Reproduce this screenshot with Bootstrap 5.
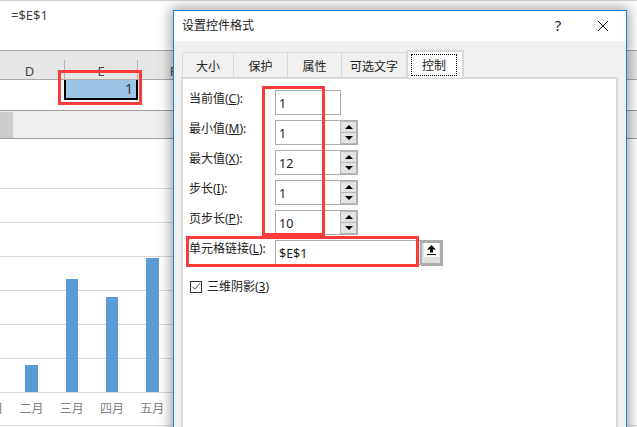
<!DOCTYPE html>
<html lang="zh-CN">
<head>
<meta charset="utf-8">
<title>设置控件格式</title>
<link href="https://cdn.jsdelivr.net/npm/bootstrap@5.3.0/dist/css/bootstrap.min.css" rel="stylesheet">
<style>
html,body{margin:0;padding:0;background:#fff}
body{font-family:"Noto Sans","Noto Sans CJK SC",sans-serif;font-size:12px;line-height:16px;color:#222}
.sheet{position:relative;width:637px;height:427px;overflow:hidden;background:#fff}
.fbar{height:51px;padding:6px 0 0 11px;border-top:1px solid #d4d4d4;border-bottom:1px solid #ababab;color:#444;font-size:13px}
.colhead{height:29px;background:#e6e6e6;border-bottom:1px solid #ababab}
.colcell{height:19px;margin-top:9px;text-align:center;color:#444;font-size:13px;line-height:22px}
.c-d{width:65px;border-right:1px solid #b5b5b5;padding-right:5px}
.c-e{width:73px;border-right:1px solid #b5b5b5}
.c-f{width:70px}
.cellrow{height:31px;border-bottom:1px solid #9a9a9a}
.selcell{margin-left:64px;width:74px;height:20px;background:#9dc3e6;border:2px solid #000;border-top:0;text-align:right;padding-right:3px;color:#333;font-size:14px;line-height:18px}
.scrollband{height:28px;background:#eee;border-bottom:1px solid #9a9a9a;padding-top:1px}
.thumb{width:13px;height:26px;background:#ccc}
.plot{margin-top:49px;height:205px;padding-bottom:1px;margin-left:-29px;width:230px;background:repeating-linear-gradient(to top,#d9d9d9 0 1px,transparent 1px 34px)}
.slot{width:40.3px;height:204px;flex:none}
.barfill{width:13px;background:#5b9bd5}
.b1{height:27px}.b2{height:113px;width:12px}.b3{height:95px;width:12px}.b4{height:134px}
.xlabels{margin-left:-29px;width:230px;height:32px;color:#7f7f7f;font-size:12px;line-height:32px}
.xlab{width:40.3px;flex:none;text-align:center}
.xline{border-top:1px solid #d9d9d9}
.dlg{position:absolute;left:173px;top:10px;width:454px;height:440px;background:#f0f0f0;border:1px solid #1883d7;box-shadow:0 0 12px 2px rgba(0,0,0,.38)}
.dlgtitle{height:30px;background:#fff;padding:7px 0 0 8px;font-size:12px;color:#222}
.dlgq{margin-left:auto;width:16px;text-align:center;margin-top:-1px;font-size:15px}
.dlgx{margin:2px 17px 0 31px;width:12px;height:12px}
.dlgbody{padding:11px 8px 0 7px}
.tabstrip{margin-left:1px;height:25px;flex-wrap:nowrap}
.tabstrip .tabitem{height:25px;padding:5px 0 0;text-align:center;background:#f0f0f0;border:1px solid #d9d9d9;border-bottom:0;border-right:0;color:#222;font-size:12px;line-height:18px}
.t1{width:51px}.t2{width:54px}.t3{width:54px}.t4{width:65px}
.tabstrip .t5{width:58px;height:28px;margin-top:-2px;background:#fff;border:2px solid #d9d9d9;border-bottom:0;padding:2px 5px 0 3px;position:relative;z-index:2}
.focusbox{display:block;height:22px;border:1px dotted #000;line-height:21px}
.pane{height:350px;background:#fff;border:2px solid #d9d9d9;border-bottom:0;padding:11px 0 0 6px}
.frow{height:25px;margin-bottom:5px}
.flabel{width:86px;flex:none;padding-top:1px;color:#222}
.fbox{height:25px;border:1px solid #ababab;background:#fff;line-height:25px;padding-left:3px;color:#222;font-size:12.5px}
.w-cur{width:66px}
.w-num{width:83px}
.w-link{width:146px}
.spin{width:17px;margin-left:auto;padding:1px;background:#b8b8b8}
.spinbtn{height:10px;background:#e3e3e3}
.spinbtn+.spinbtn{margin-top:1px}
.tri-up,.tri-dn{width:0;height:0;border-left:4px solid transparent;border-right:4px solid transparent}
.tri-up{border-bottom:4px solid #000}
.tri-dn{border-top:4px solid #000}
.refbtn{width:22px;height:26px;background:#e1e1e1;border:3px solid #adadad;border-left:1px solid #adadad}
.refface{background:#fff;height:14px;width:15px;margin-left:2px}
.chkrow{margin-top:14px;padding-left:1px}
.chkbox{width:12px;height:12px;border:1px solid #333;background:#fff;margin-right:5px}
.redbox{position:absolute;border:3px solid #fb3a3a;z-index:5}
.r1{left:58px;top:70px;width:84px;height:35px}
.r2{left:262px;top:86px;width:63px;height:150px}
.r3{left:186px;top:236px;width:233px;height:31px}
</style>
</head>
<body>
<div class="sheet">
  <div class="fbar">=$E$1</div>
  <div class="colhead d-flex">
    <div class="colcell c-d">D</div>
    <div class="colcell c-e">E</div>
    <div class="colcell c-f">F</div>
  </div>
  <div class="cellrow"><div class="selcell">1</div></div>
  <div class="scrollband"><div class="thumb"></div></div>
  <div class="plot d-flex align-items-end">
    <div class="slot"></div>
    <div class="slot d-flex justify-content-center align-items-end"><div class="barfill b1"></div></div>
    <div class="slot d-flex justify-content-center align-items-end"><div class="barfill b2"></div></div>
    <div class="slot d-flex justify-content-center align-items-end"><div class="barfill b3"></div></div>
    <div class="slot d-flex justify-content-center align-items-end"><div class="barfill b4"></div></div>
  </div>
  <div class="xlabels d-flex">
    <div class="xlab">一月</div><div class="xlab">二月</div><div class="xlab">三月</div><div class="xlab">四月</div><div class="xlab">五月</div>
  </div>
  <div class="xline"></div>

  <div class="dlg">
    <div class="dlgtitle d-flex">
      <span>设置控件格式</span>
      <span class="dlgq">?</span>
      <svg class="dlgx" viewBox="0 0 12 12"><path d="M1 1 11 11M11 1 1 11" stroke="#111" stroke-width="1" fill="none"/></svg>
    </div>
    <div class="dlgbody">
      <div class="tabstrip d-flex">
        <div class="tabitem t1">大小</div>
        <div class="tabitem t2">保护</div>
        <div class="tabitem t3">属性</div>
        <div class="tabitem t4">可选文字</div>
        <div class="tabitem t5"><span class="focusbox">控制</span></div>
      </div>
      <div class="pane">
        <div class="frow d-flex">
          <div class="flabel">当前值(<u>C</u>):</div>
          <div class="fbox w-cur">1</div>
        </div>
        <div class="frow d-flex">
          <div class="flabel">最小值(<u>M</u>):</div>
          <div class="fbox w-num d-flex">1
            <div class="spin"><div class="spinbtn d-flex justify-content-center align-items-center"><div class="tri-up"></div></div><div class="spinbtn d-flex justify-content-center align-items-center"><div class="tri-dn"></div></div></div>
          </div>
        </div>
        <div class="frow d-flex">
          <div class="flabel">最大值(<u>X</u>):</div>
          <div class="fbox w-num d-flex">12
            <div class="spin"><div class="spinbtn d-flex justify-content-center align-items-center"><div class="tri-up"></div></div><div class="spinbtn d-flex justify-content-center align-items-center"><div class="tri-dn"></div></div></div>
          </div>
        </div>
        <div class="frow d-flex">
          <div class="flabel">步长(<u>I</u>):</div>
          <div class="fbox w-num d-flex">1
            <div class="spin"><div class="spinbtn d-flex justify-content-center align-items-center"><div class="tri-up"></div></div><div class="spinbtn d-flex justify-content-center align-items-center"><div class="tri-dn"></div></div></div>
          </div>
        </div>
        <div class="frow d-flex">
          <div class="flabel">页步长(<u>P</u>):</div>
          <div class="fbox w-num d-flex">10
            <div class="spin"><div class="spinbtn d-flex justify-content-center align-items-center"><div class="tri-up"></div></div><div class="spinbtn d-flex justify-content-center align-items-center"><div class="tri-dn"></div></div></div>
          </div>
        </div>
        <div class="frow d-flex">
          <div class="flabel">单元格链接(<u>L</u>):</div>
          <div class="fbox w-link">$E$1</div>
          <div class="refbtn">
            <div class="refface d-flex justify-content-center align-items-center">
              <svg width="11" height="12" viewBox="0 0 11 12"><path d="M5.5 1 10 5.5H7V8.5H4V5.5H1Z M1 10H10V11H1Z" fill="#000"/></svg>
            </div>
          </div>
        </div>
        <div class="chkrow d-flex align-items-center">
          <svg class="chkbox" viewBox="0 0 12 12"><path d="M1.5 5.5 4.5 8.5 11 1.5" stroke="#444" stroke-width="1.2" fill="none"/></svg>
          <span>三维阴影(<u>3</u>)</span>
        </div>
      </div>
    </div>
  </div>

  <div class="redbox r1"></div>
  <div class="redbox r2"></div>
  <div class="redbox r3"></div>
</div>
<script src="https://cdn.jsdelivr.net/npm/bootstrap@5.3.0/dist/js/bootstrap.bundle.min.js"></script>
</body>
</html>
